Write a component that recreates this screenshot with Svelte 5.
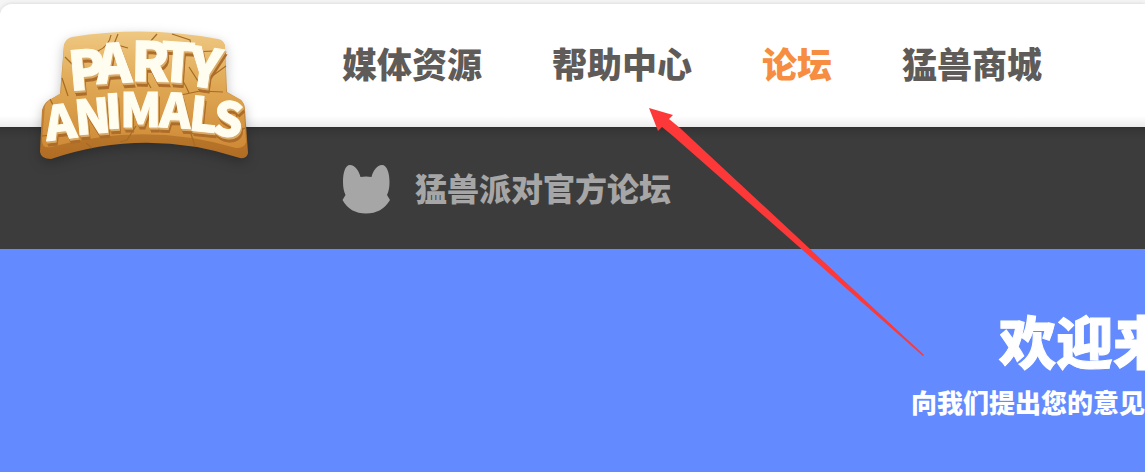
<script lang="ts">
	interface NavItem {
		label: string;
		href: string;
		active?: boolean;
	}

	const navItems: NavItem[] = [
		{ label: '媒体资源', href: '#media' },
		{ label: '帮助中心', href: '#help' },
		{ label: '论坛', href: '#forum', active: true },
		{ label: '猛兽商城', href: '#shop' }
	];
</script>

<div class="page">
	<header class="topbar">
		<a class="logo" href="#home" aria-label="Party Animals">
			<svg viewBox="0 0 230 150" width="230" height="150">
				<defs>
					<linearGradient id="stone" x1="0" y1="0" x2="0" y2="1">
						<stop offset="0" stop-color="#efc882" />
						<stop offset="0.45" stop-color="#e0a955" />
						<stop offset="1" stop-color="#cf8a36" />
					</linearGradient>
					<linearGradient id="edge" x1="0" y1="0" x2="0" y2="1">
						<stop offset="0" stop-color="#dba657" />
						<stop offset="1" stop-color="#b06c22" />
					</linearGradient>
				</defs>
				<path
					fill="url(#edge)"
					d="M34 25Q36 19 42 18Q115 6 188 20Q194 21 195 26L197 72L211 80Q215 84 215 90L218 133Q217 139 210 138Q115 107 21 139Q11 139 10 132L12 90Q14 82 21 79L30 74Z"
				/>
				<path
					fill="url(#stone)"
					d="M34 25Q36 18 42 17Q115 5 188 19Q194 20 195 26L196 72L211 80Q215 84 214 90L216 122Q215 128 206 128Q115 101 21 127Q12 129 12 120L15 86Q17 81 23 78L31 73Z"
				/>
				<path
					class="cracks"
					d="M81 15Q79 26 68 31L66 40M88 14L84 24L98 28M127 14L119 23M142 14L160 20L162 32L184 31M35 37L43 45M159 47L168 61L181 57L196 46M144 48Q154 61 159 73M193 72L170 71L151 75M32 58L38 76M110 49L121 68M20 79L25 89M204 83L207 97M12 116L32 114M90 122L97 120L106 106M56 123L62 128M161 114L165 126M215 108L204 114"
				/>
				<g class="letters">
					<text class="party" x="40 67 101 129 156" y="71 64 61 61 65" rotate="-5 -3 1 4 8">PARTY</text>
					<text class="animals" x="17 46 76 90 129 158 181" y="121 115 109 107 107 110 114" rotate="-7 -5 -3 0 3 6 8">ANIMALS</text>
				</g>
			</svg>
		</a>
		<nav class="nav">
			{#each navItems as item (item.href)}
				<a href={item.href} class:active={item.active}>{item.label}</a>
			{/each}
		</nav>
	</header>

	<div class="forum-bar">
		<svg class="forum-icon" viewBox="0 0 48 50" width="48" height="50" aria-hidden="true">
			<path
				fill="currentColor"
				d="M8 1C13 1 17 7 18.500 13Q24 12 29.500 13C31 7 35 1 40 1C45 1 47.500 9 47.500 18Q47.500 26 45 31L48 36Q40 49.500 24 49.500Q8 49.500 0.500 36L3.500 31Q1 26 1 18C1 9 3 1 8 1Z"
			/>
		</svg>
		<a href="#forum">猛兽派对官方论坛</a>
	</div>

	<main class="hero">
		<h1>欢迎来</h1>
		<p>向我们提出您的意见</p>
	</main>

	<svg class="pointer" viewBox="0 0 276 250" width="276" height="250" aria-hidden="true">
		<path fill="#fc3838" d="M0 0L24 7L20 11L31 20L275 247L274 248L24 28L13 19L9 23Z" />
	</svg>
</div>

<style>
	:global(body) {
		background: #638bff;
	}

	.page {
		position: relative;
		overflow: hidden;
		padding-top: 4px;
		background: #f5f5f5;
		font-family: 'Noto Sans CJK SC', sans-serif;
		font-weight: 900;
	}

	.page a {
		color: inherit;
		text-decoration: none;
	}

	.topbar {
		position: relative;
		display: flex;
		height: 123px;
		padding-left: 30px;
		background: linear-gradient(#fff 112px, #ececec);
		border-top-left-radius: 12px;
		box-shadow: 0 0 4px rgb(0 0 0 / 0.15);
	}

	.logo {
		flex: none;
		width: 230px;
		padding-top: 16px;
	}

	.logo svg {
		display: block;
		filter: drop-shadow(0 4px 6px rgb(0 0 0 / 0.25));
	}

	.cracks {
		fill: none;
		stroke: #a66b22;
		stroke-width: 1.2;
	}

	.letters {
		fill: #fffdf0;
		stroke: #fffdf0;
		stroke-width: 1px;
		filter: drop-shadow(1px 2px 0 #d9ab68) drop-shadow(1px 3px 0 #ad6c29);
	}

	.party {
		font-size: 54px;
	}

	.animals {
		font-size: 47px;
	}

	.nav {
		display: flex;
		gap: 70px;
		padding: 34px 0 0 82px;
		color: #5f5b58;
		font-size: 35px;
		line-height: 50px;
		white-space: nowrap;
	}

	.nav .active {
		color: #f78d40;
	}

	.forum-bar {
		display: flex;
		align-items: center;
		gap: 25px;
		box-sizing: border-box;
		height: 122px;
		padding: 2px 0 0 342px;
		background: linear-gradient(#343434, #3c3c3c 12px);
		color: #a6a6a6;
		font-size: 32px;
		line-height: 48px;
		white-space: nowrap;
	}

	.forum-bar a {
		padding-bottom: 4px;
	}

	.hero {
		padding: 48px 0 52px 911px;
		background: #638bff;
		color: #fff;
		white-space: nowrap;
	}

	h1,
	p {
		margin: 0;
		font-weight: 900;
	}

	h1 {
		padding-left: 88px;
		font-size: 57px;
		line-height: 84px;
		-webkit-text-stroke: 1px currentColor;
	}

	p {
		font-size: 26px;
		line-height: 42px;
	}

	/* callout arrow drawn over the page */
	.pointer {
		position: absolute;
		top: 108px;
		left: 649px;
		pointer-events: none;
	}
</style>
